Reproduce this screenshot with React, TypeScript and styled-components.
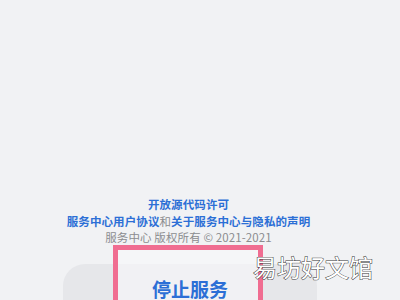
import React from "react";
import styled, { createGlobalStyle } from "styled-components";

const Global = createGlobalStyle`
  html, body { margin: 0; padding: 0; }
  body {
    background: #f1f2f4;
    font-family: "Noto Sans CJK SC", "Noto Sans", sans-serif;
    overflow: hidden;
  }
`;

const Page = styled.div`
  position: relative;
  width: 400px;
  height: 300px;
  overflow: hidden;
  background: #f1f2f4;
  display: flex;
  flex-direction: column;
  align-items: center;
  padding-top: 196px;
  box-sizing: border-box;
`;

const Links = styled.div`
  display: flex;
  flex-direction: column;
  align-items: center;
  margin-right: 23px;
`;

const Line = styled.div<{ $muted?: boolean }>`
  font-size: 11.5px;
  line-height: 16.5px;
  font-weight: ${(p) => (p.$muted ? 400 : 700)};
  color: ${(p) => (p.$muted ? "#8b8c8f" : "#2c6fd6")};
  white-space: nowrap;
  letter-spacing: 0.1px;
`;

const Plain = styled.span`
  color: #8b8c8f;
  font-weight: 400;
`;

const ButtonRow = styled.div`
  margin-top: 18px;
  width: 100%;
  display: flex;
  justify-content: flex-start;
  padding-left: 63px;
  box-sizing: border-box;
`;

const StopButton = styled.div`
  width: 254px;
  height: 60px;
  border-radius: 22px;
  background: #e6e7ea;
  display: flex;
  justify-content: center;
  padding-top: 12px;
  box-sizing: border-box;
`;

const ButtonLabel = styled.span`
  position: relative;
  z-index: 1;
  color: #2c6fd6;
  font-size: 19px;
  font-weight: 700;
  line-height: 26px;
`;

const Highlight = styled.div`
  position: absolute;
  left: 113px;
  top: 245px;
  width: 150px;
  height: 70px;
  border: 5px solid #f06d91;
  box-sizing: border-box;
  background: rgba(248, 248, 250, 0.6);
  pointer-events: none;
`;

const Watermark = styled.div`
  position: absolute;
  left: 253px;
  top: 252px;
  z-index: 2;
  font-size: 24px;
  line-height: 30px;
  font-family: "Noto Sans CJK SC", sans-serif;
  font-weight: 400;
  color: #ffffff;
  -webkit-text-stroke: 1px #3a3a3a;
  paint-order: stroke fill;
`;

export default function App() {
  return (
    <Page>
      <Global />
      <Links>
        <Line>开放源代码许可</Line>
        <Line>
          服务中心用户协议<Plain>和</Plain>关于服务中心与隐私的声明
        </Line>
        <Line $muted>服务中心 版权所有 © 2021-2021</Line>
      </Links>
      <ButtonRow>
        <StopButton>
          <ButtonLabel>停止服务</ButtonLabel>
        </StopButton>
      </ButtonRow>
      <Highlight />
      <Watermark>易坊好文馆</Watermark>
    </Page>
  );
}
